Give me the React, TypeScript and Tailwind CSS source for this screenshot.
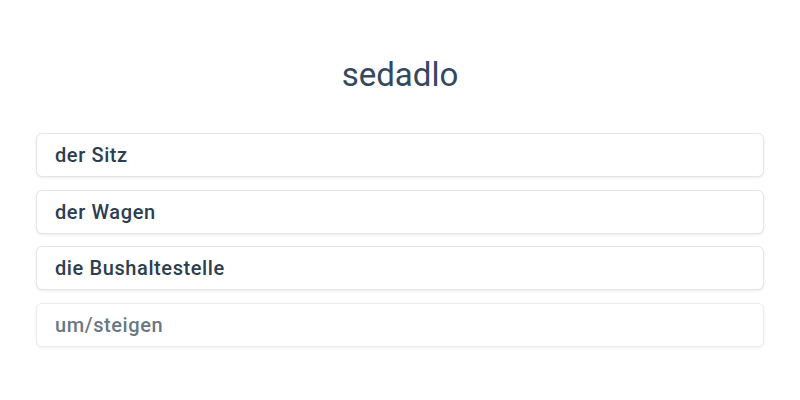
const options = [
  { label: "der Sitz", faded: false },
  { label: "der Wagen", faded: false },
  { label: "die Bushaltestelle", faded: false },
  { label: "um/steigen", faded: true },
];

export default function App() {
  return (
    <div className="h-[400px] w-[800px] bg-white font-['Roboto',sans-serif] text-[#2c3e50]">
      <div className="flex flex-col items-center pt-[54px]">
        <h1 className="text-[33px] leading-[42px] text-[#34495e]">sedadlo</h1>
      </div>
      <div className="mt-[37px] flex flex-col gap-[12.67px] px-[36px]">
        {options.map((option) => (
          <button
            key={option.label}
            type="button"
            className={`flex h-[44px] items-center rounded-[6px] border border-[#e4e4e4] bg-white px-[18px] text-left text-[20px] font-medium tracking-[0.6px] text-[#2c3e50] shadow-[0_1px_3px_rgba(0,0,0,0.08)] ${
              option.faded ? "opacity-70" : ""
            }`}
          >
            {option.label}
          </button>
        ))}
      </div>
    </div>
  );
}
